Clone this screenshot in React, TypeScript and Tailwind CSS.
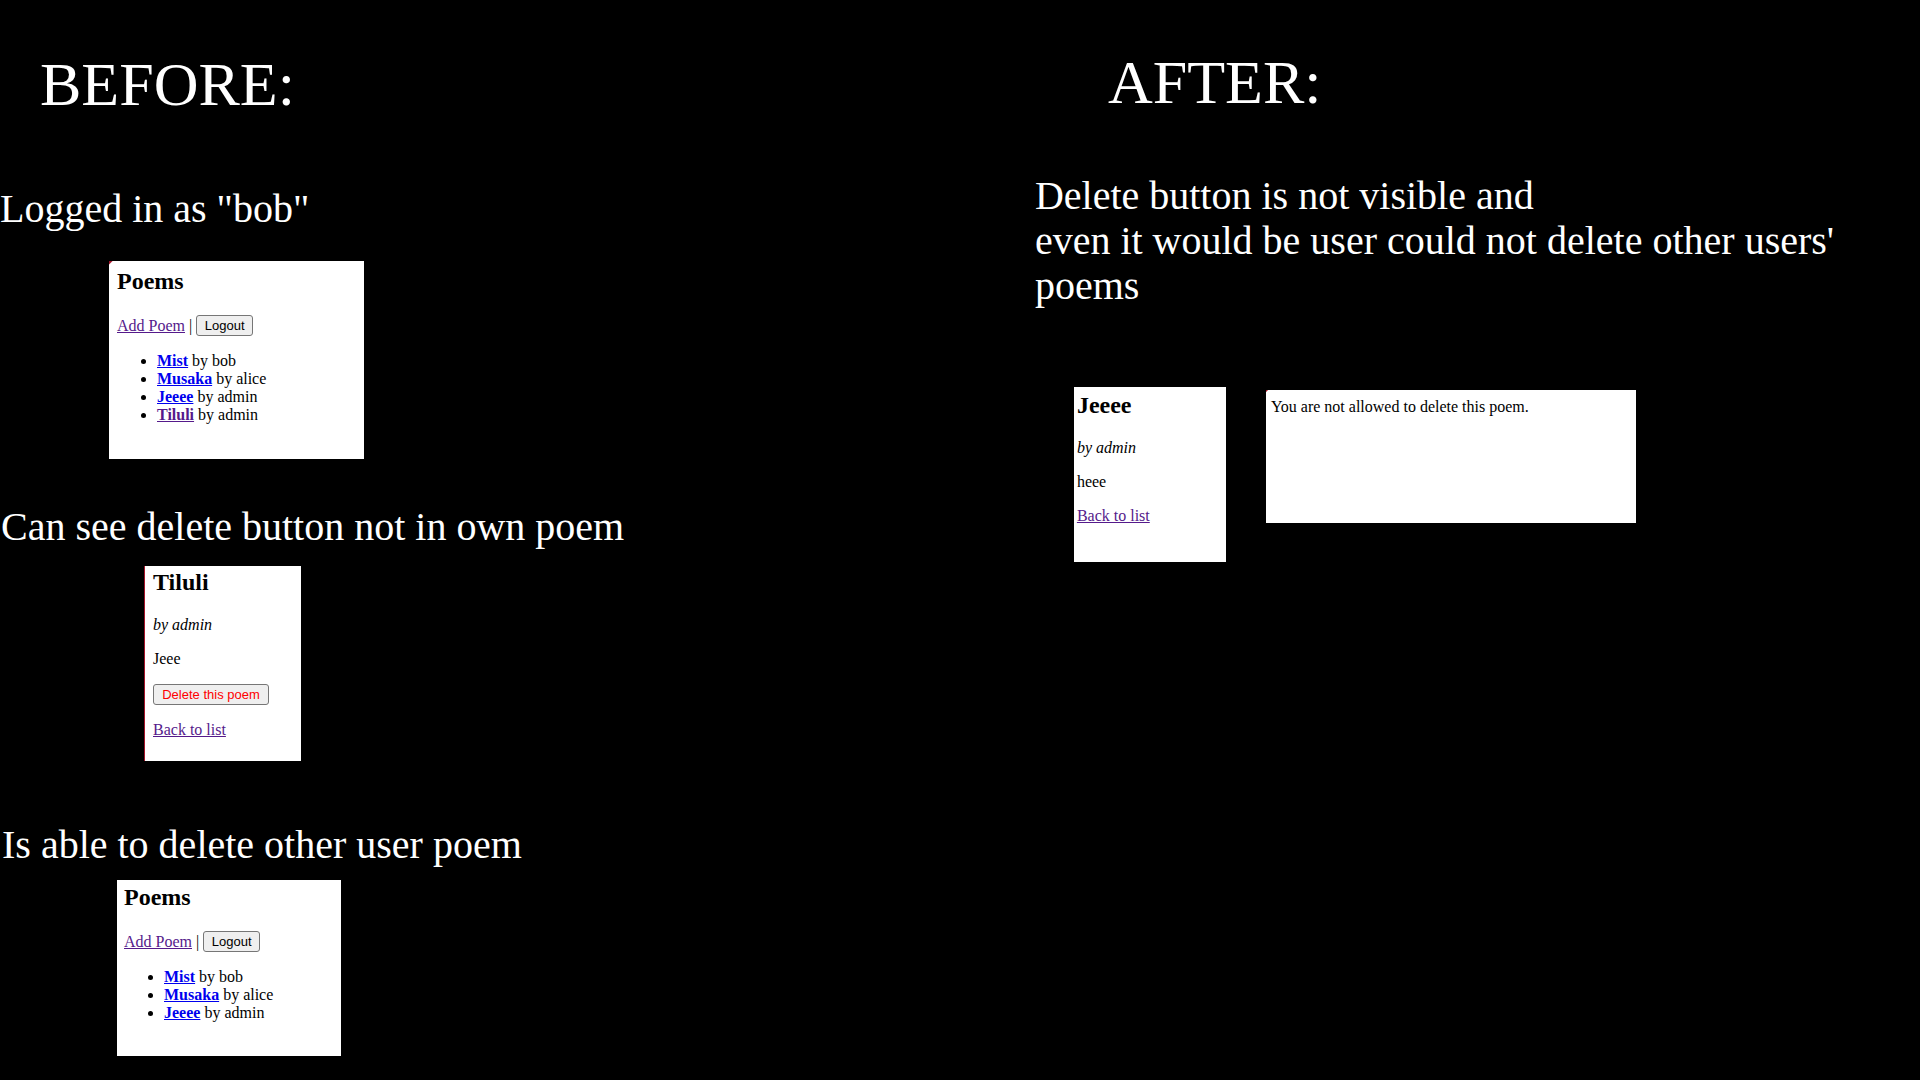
import type { ReactNode } from "react";

const visited = "text-[#551a8b] underline";
const unvisited = "font-bold text-[#0000ee] underline";
const visitedBold = "font-bold text-[#551a8b] underline";

type Poem = { title: string; author: string; seen?: boolean };

function PageButton({ children, danger = false }: { children: ReactNode; danger?: boolean }) {
  return (
    <button
      type="button"
      className={`h-[21px] rounded-[3px] border border-[#767676] bg-[#efefef] font-['Liberation_Sans',Arial,sans-serif] text-[13px] leading-[17px] whitespace-nowrap ${danger ? "w-[116px] text-[#ff0000]" : "w-[57px] text-black"}`}
    >
      {children}
    </button>
  );
}

function PoemList({ poems }: { poems: Poem[] }) {
  return (
    <>
      <h3 className="text-2xl leading-[27px] font-bold">Poems</h3>
      <div className="mt-5 flex items-center gap-1">
        <a href="#add" className={visited}>Add Poem</a>
        <span>|</span>
        <PageButton>Logout</PageButton>
      </div>
      <ul className="mt-4 list-disc pl-10">
        {poems.map((p) => (
          <li key={p.title}>
            <a href="#poem" className={p.seen ? visitedBold : unvisited}>{p.title}</a> by {p.author}
          </li>
        ))}
      </ul>
    </>
  );
}

function PoemDetail({ title, body, canDelete = false }: { title: string; body: string; canDelete?: boolean }) {
  return (
    <div className="flex flex-col items-start gap-4">
      <h3 className="mb-1 text-2xl leading-[27px] font-bold">{title}</h3>
      <p className="italic">by admin</p>
      <p>{body}</p>
      {canDelete && <PageButton danger>Delete this poem</PageButton>}
      <a href="#list" className={visited}>Back to list</a>
    </div>
  );
}

const poems: Poem[] = [
  { title: "Mist", author: "bob" },
  { title: "Musaka", author: "alice" },
  { title: "Jeeee", author: "admin" },
];

export default function App() {
  return (
    <main className="grid min-h-screen grid-cols-[53.9%_1fr] bg-black font-['Liberation_Serif','Times_New_Roman',serif] text-base leading-[18px] text-black">
      <section className="flex flex-col items-start pt-[50px] pb-6">
        <h1 className="ml-10 text-[62px] leading-[68px] text-white">BEFORE:</h1>

        <h2 className="mt-[68px] text-[40px] leading-[45px] text-white">Logged in as "bob"</h2>
        <div className="mt-[30px] ml-[109px] w-[255px] bg-white bg-[linear-gradient(135deg,#a3142a_2px,transparent_3px)] px-2 pt-[7px] pb-[35px]">
          <PoemList poems={[...poems, { title: "Tiluli", author: "admin", seen: true }]} />
        </div>

        <h2 className="mt-[45px] ml-px text-[40px] leading-[45px] text-white">Can see delete button not in own poem</h2>
        <div className="mt-[17px] ml-36 w-[157px] border-l border-[#a3142a] bg-white px-2 pt-[3px] pb-[22px]">
          <PoemDetail title="Tiluli" body="Jeee" canDelete />
        </div>

        <h2 className="mt-[61px] ml-0.5 text-[40px] leading-[45px] text-white">Is able to delete other user poem</h2>
        <div className="mt-[13px] ml-[117px] w-[224px] bg-white px-[7px] pt-1 pb-[34px]">
          <PoemList poems={poems} />
        </div>
      </section>

      <section className="pt-12">
        <h1 className="ml-[73px] text-[62px] leading-[68px] text-white">AFTER:</h1>
        <p className="mt-[57px] text-[40px] leading-[45px] text-white">
          Delete button is not visible and
          <br />
          even it would be user could not delete other users' poems
        </p>
        <div className="mt-[79px] ml-[39px] flex items-start gap-10">
          <div className="w-[152px] bg-white px-[3px] pt-[5px] pb-[37px]">
            <PoemDetail title="Jeeee" body="heee" />
          </div>
          <div className="mt-[3px] w-[370px] bg-white bg-[linear-gradient(135deg,#a3142a_1px,transparent_2px)] px-[5px] pt-2 pb-[107px]">
            <p>You are not allowed to delete this poem.</p>
          </div>
        </div>
      </section>
    </main>
  );
}
